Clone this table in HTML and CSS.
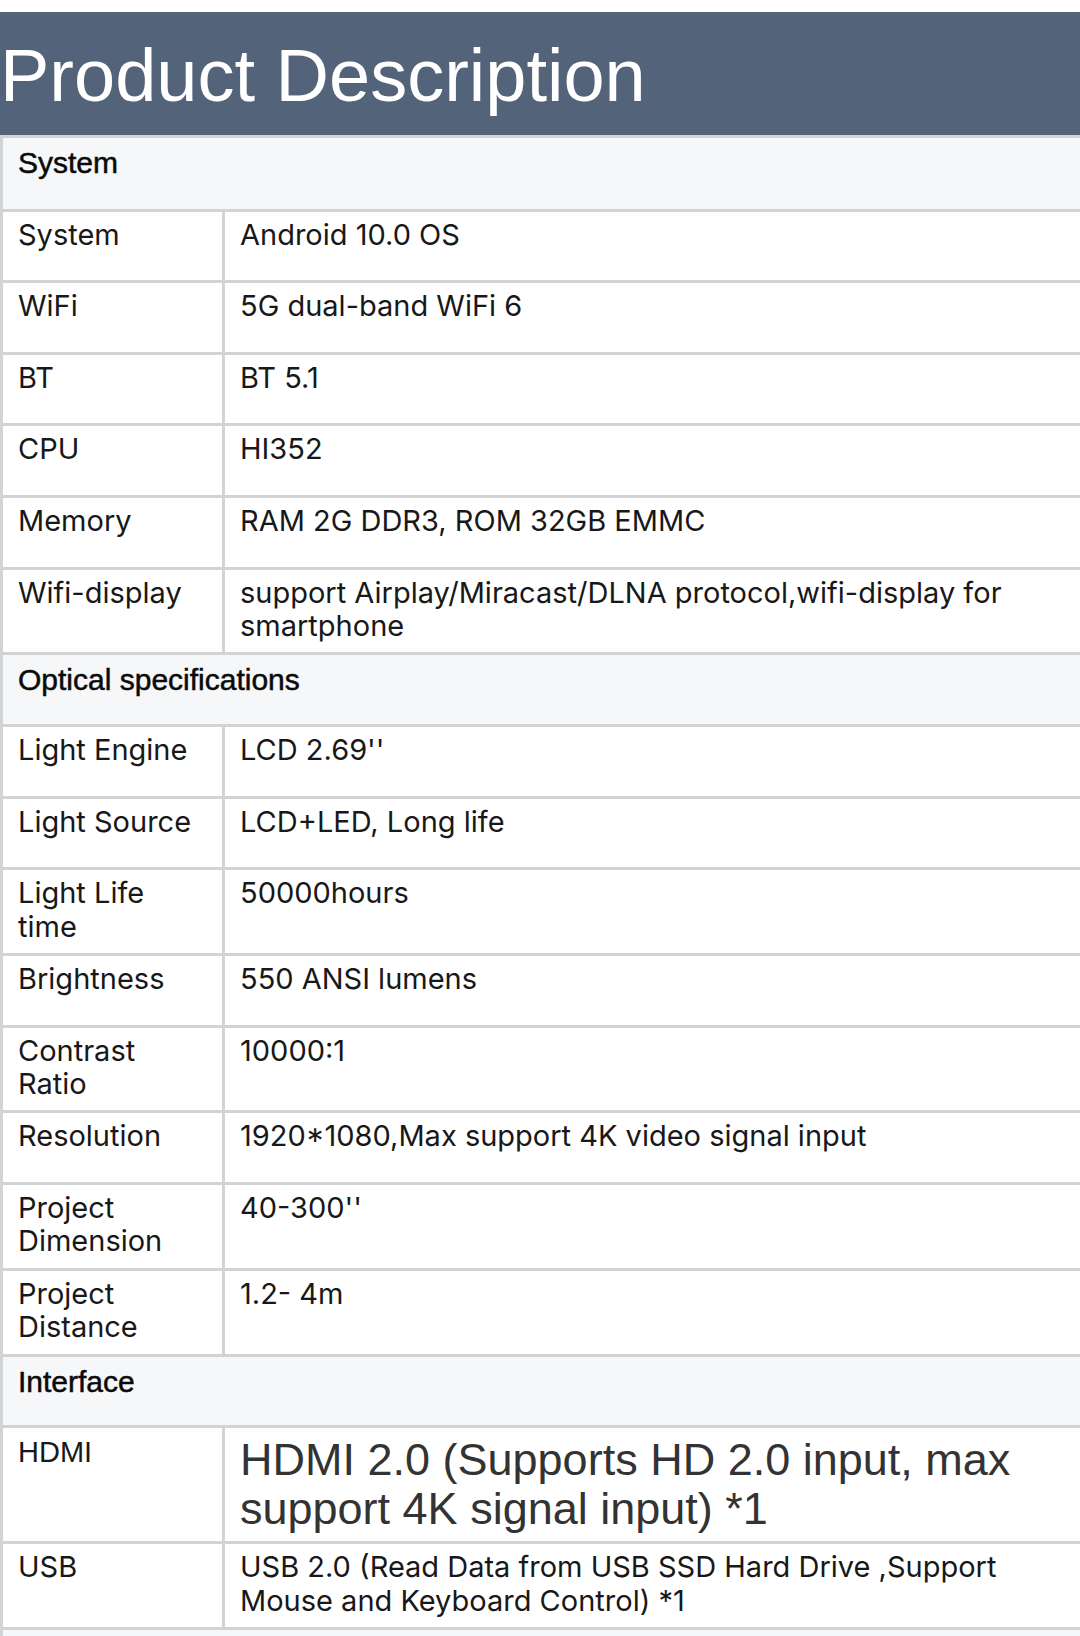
FILE: index.html
```html
<!DOCTYPE html>
<html lang="en">
<head>
<meta charset="utf-8">
<title>Product Description</title>
<link rel="stylesheet" href="styles.css">
</head>
<body>
<div class="page">
  <h1 class="title-bar">Product Description</h1>
  <table class="spec">
    <colgroup><col class="c-key"><col class="c-val"></colgroup>
    <tbody>
      <tr class="sec"><td colspan="2">System</td></tr>
      <tr><td>System</td><td>Android 10.0 OS</td></tr>
      <tr><td>WiFi</td><td>5G dual-band WiFi 6</td></tr>
      <tr><td>BT</td><td>BT 5.1</td></tr>
      <tr><td>CPU</td><td>HI352</td></tr>
      <tr><td>Memory</td><td>RAM 2G DDR3, ROM 32GB EMMC</td></tr>
      <tr><td>Wifi-display</td><td>support Airplay/Miracast/DLNA protocol,wifi-display for smartphone</td></tr>
      <tr class="sec"><td colspan="2">Optical specifications</td></tr>
      <tr><td>Light Engine</td><td>LCD 2.69''</td></tr>
      <tr><td>Light Source</td><td>LCD+LED, Long life</td></tr>
      <tr><td>Light Life time</td><td>50000hours</td></tr>
      <tr><td>Brightness</td><td>550 ANSI lumens</td></tr>
      <tr><td>Contrast Ratio</td><td>10000:1</td></tr>
      <tr><td>Resolution</td><td>1920*1080,Max support 4K video signal input</td></tr>
      <tr><td>Project Dimension</td><td>40-300''</td></tr>
      <tr><td>Project Distance</td><td>1.2- 4m</td></tr>
      <tr class="sec"><td colspan="2">Interface</td></tr>
      <tr class="big"><td class="alt">HDMI</td><td class="alt-big">HDMI 2.0 (Supports HD 2.0 input, max support 4K signal input) *1</td></tr>
      <tr><td>USB</td><td>USB 2.0 (Read Data from USB SSD Hard Drive ,Support Mouse and Keyboard Control) *1</td></tr>
      <tr class="sec"><td colspan="2">&nbsp;</td></tr>
    </tbody>
  </table>
</div>
</body>
</html>
```

FILE: styles.css
```css
html, body {
  margin: 0;
  padding: 0;
  background: #ffffff;
}
body {
  overflow: hidden;
  font-family: Inter, Roboto, "Liberation Sans", sans-serif;
  color: #111111;
}
.page {
  padding-top: 12px;
}
.title-bar {
  margin: 0;
  height: 123px;
  box-sizing: border-box;
  padding: 4px 0 0 0;
  background: #536379;
  color: #ffffff;
  font-family: "Liberation Sans", Arial, sans-serif;
  font-weight: normal;
  font-size: 74px;
  line-height: 119px;
  white-space: nowrap;
}
.spec {
  width: 1080px;
  border-collapse: separate;
  border-spacing: 0;
  table-layout: fixed;
}
.c-key { width: 222px; }
.spec td {
  border-top: 3px solid #d2d3d5;
  border-left: 3px solid #d2d3d5;
  padding: 6px 18px 10px 15px;
  height: 71.6px;
  box-sizing: border-box;
  vertical-align: top;
  font-size: 29px;
  line-height: 33.4px;
  color: #181818;
}
.spec tr.sec td {
  background: #f6f7f9;
  font-family: "Liberation Sans", Arial, sans-serif;
  font-size: 30px;
  padding-top: 8px;
  color: #0a0a0a;
  -webkit-text-stroke: 0.5px #0a0a0a;
}
.spec tr:first-child td {
  height: 73.7px;
}
.spec td.alt {
  font-family: "Liberation Sans", Arial, sans-serif;
  font-size: 29px;
  padding-top: 8px;
}
.spec td.alt-big {
  font-family: "Liberation Sans", Arial, sans-serif;
  font-size: 45px;
  line-height: 49px;
  padding-top: 7px;
  padding-bottom: 8px;
  color: #333333;
}
```
